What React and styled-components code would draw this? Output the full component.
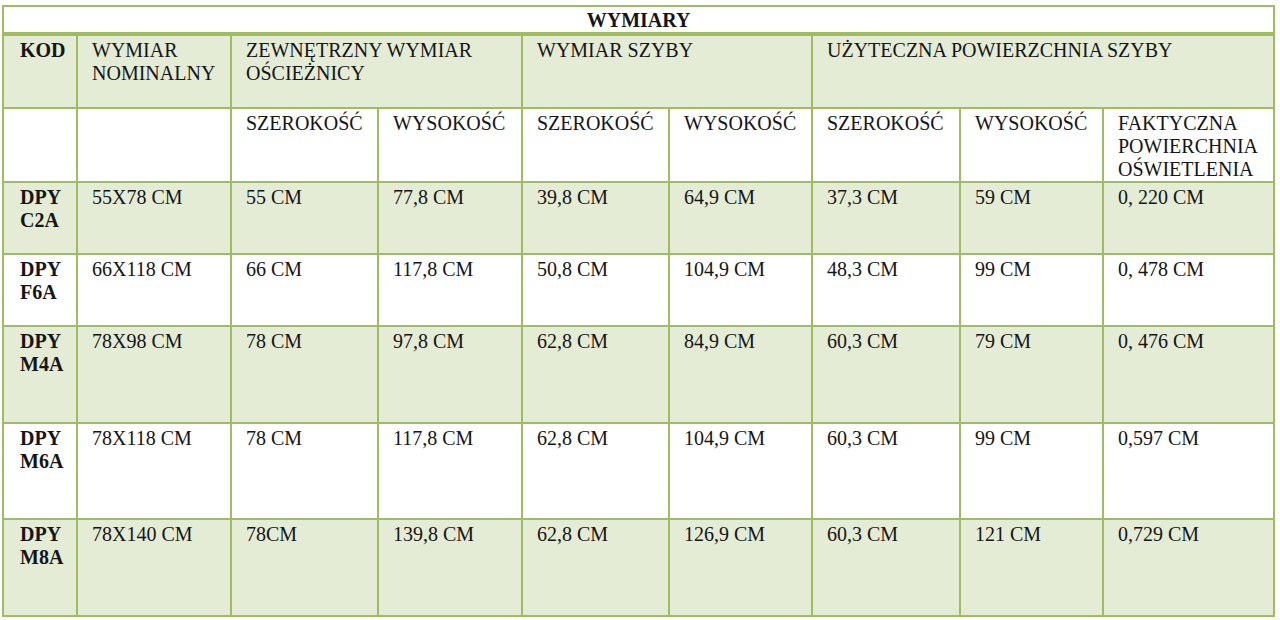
import React from "react";
import styled, { createGlobalStyle } from "styled-components";

const Global = createGlobalStyle`
  html, body { margin: 0; padding: 0; background: #ffffff; }
  body { font-family: "Liberation Serif", "Times New Roman", serif; color: #151515; }
`;

const LINE = "#9fbc60";
const FILL = "#e4ecd6";

const Page = styled.div`
  padding: 5px 0 0 2px;
  width: 1280px;
  box-sizing: border-box;
`;

const Table = styled.table`
  border-collapse: collapse;
  table-layout: fixed;
  width: 1272px;
  font-size: 20px;
  line-height: 23px;
`;

const Row = styled.tr`
  height: ${(p) => p.$h}px;
  background: ${(p) => (p.$shade ? FILL : "#ffffff")};
`;

const Cell = styled.td`
  border: 2px solid ${LINE};
  padding: 3px 6px 0 14px;
  vertical-align: top;
  text-align: left;
  font-weight: ${(p) => (p.$bold ? 700 : 400)};
`;

const KodCell = styled(Cell)`
  padding-left: 16px;
  font-weight: 700;
`;

const TitleCell = styled.td`
  border: 2px solid ${LINE};
  border-bottom: 4px solid ${LINE};
  padding: 2px 0 0 0;
  text-align: center;
  vertical-align: top;
  font-weight: 700;
`;

const widths = [74, 154, 147, 144, 147, 143, 148, 143, 171];

const data = [
  { kod: ["DPY", "C2A"], h: 72, shade: true, v: ["55X78 CM", "55 CM", "77,8 CM", "39,8 CM", "64,9 CM", "37,3 CM", "59 CM", "0, 220 CM"] },
  { kod: ["DPY", "F6A"], h: 72, shade: false, v: ["66X118 CM", "66 CM", "117,8 CM", "50,8 CM", "104,9 CM", "48,3 CM", "99 CM", "0, 478 CM"] },
  { kod: ["DPY", "M4A"], h: 97, shade: true, v: ["78X98 CM", "78 CM", "97,8 CM", "62,8 CM", "84,9 CM", "60,3 CM", "79 CM", "0, 476 CM"] },
  { kod: ["DPY", "M6A"], h: 96, shade: false, v: ["78X118 CM", "78 CM", "117,8 CM", "62,8 CM", "104,9 CM", "60,3 CM", "99 CM", "0,597 CM"] },
  { kod: ["DPY", "M8A"], h: 97, shade: true, v: ["78X140 CM", "78CM", "139,8 CM", "62,8 CM", "126,9 CM", "60,3 CM", "121 CM", "0,729 CM"] },
];

export default function App() {
  return (
    <Page>
      <Global />
      <Table>
        <colgroup>
          {widths.map((w, i) => (
            <col key={i} style={{ width: w }} />
          ))}
        </colgroup>
        <tbody>
          <Row $h={28}>
            <TitleCell colSpan={9}>WYMIARY</TitleCell>
          </Row>
          <Row $h={74} $shade>
            <KodCell>KOD</KodCell>
            <Cell>WYMIAR<br />NOMINALNY</Cell>
            <Cell colSpan={2}>ZEWNĘTRZNY WYMIAR<br />OŚCIEŻNICY</Cell>
            <Cell colSpan={2}>WYMIAR SZYBY</Cell>
            <Cell colSpan={3}>UŻYTECZNA POWIERZCHNIA SZYBY</Cell>
          </Row>
          <Row $h={74}>
            <Cell />
            <Cell />
            <Cell>SZEROKOŚĆ</Cell>
            <Cell>WYSOKOŚĆ</Cell>
            <Cell>SZEROKOŚĆ</Cell>
            <Cell>WYSOKOŚĆ</Cell>
            <Cell>SZEROKOŚĆ</Cell>
            <Cell>WYSOKOŚĆ</Cell>
            <Cell>FAKTYCZNA<br />POWIERCHNIA<br />OŚWIETLENIA</Cell>
          </Row>
          {data.map((r) => (
            <Row key={r.kod.join("")} $h={r.h} $shade={r.shade}>
              <KodCell>{r.kod[0]}<br />{r.kod[1]}</KodCell>
              {r.v.map((t, i) => (
                <Cell key={i}>{t}</Cell>
              ))}
            </Row>
          ))}
        </tbody>
      </Table>
    </Page>
  );
}
